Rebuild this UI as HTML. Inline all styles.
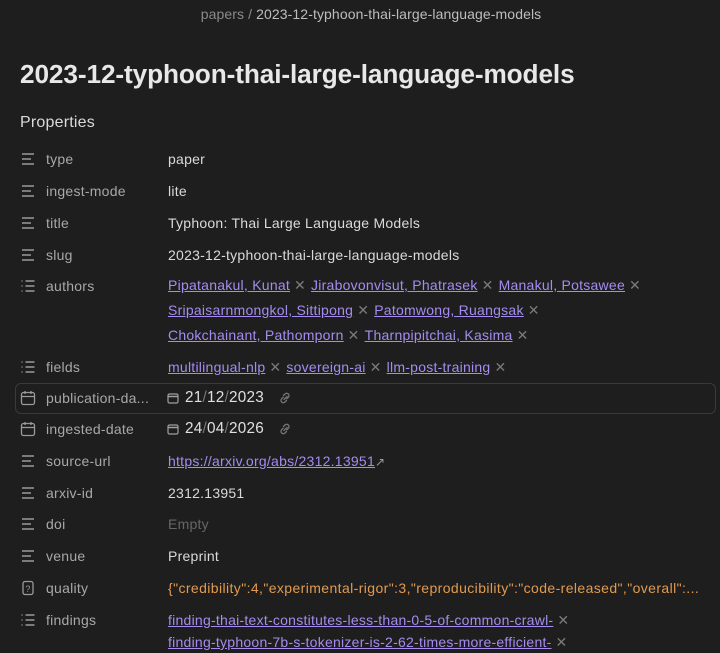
<!DOCTYPE html>
<html><head><meta charset="utf-8"><style>
html,body{margin:0;padding:0;background:#1e1e1e;width:720px;height:642px;overflow:hidden;font-family:"Liberation Sans",sans-serif;color:#dadada}
.bc{position:absolute;top:6px;left:11px;width:720px;text-align:center;font-size:14px;color:#bdbdbd;letter-spacing:0.1px}
.bc span{color:#8a8a8a}
h1{position:absolute;left:20px;top:59px;margin:0;font-size:26.2px;font-weight:bold;color:#e8e8e8;letter-spacing:-0.1px}
.ph{position:absolute;left:20px;top:114px;font-size:16px;color:#dadada;letter-spacing:0.2px}
.r{position:absolute;left:0;width:720px;font-size:14px;line-height:20px;letter-spacing:0.25px}
.ic{position:absolute;left:20px;top:2px;width:16px;height:16px}
.k{position:absolute;left:46px;color:#a8a8a8}
.v{position:absolute;left:168px;color:#dadada;white-space:nowrap}
a{color:#a48cf0;text-decoration:underline}
.x{color:#7a7a7a;margin:0 5px 0 4px}
.sl{color:#777}
.or{color:#e39a4f;letter-spacing:0.4px}
</style></head><body>
<div class="bc"><span>papers</span> <span>/</span> 2023-12-typhoon-thai-large-language-models</div>
<h1>2023-12-typhoon-thai-large-language-models</h1>
<div class="ph">Properties</div>

<svg width="0" height="0" style="position:absolute"><defs>
<g id="tx"><path d="M2 3h12M2 8h9M2 13h12" stroke="#9a9a9a" stroke-width="1.4" fill="none"/></g>
<g id="ls"><path d="M5.5 3h9M5.5 8h9M5.5 13h9" stroke="#9a9a9a" stroke-width="1.4" fill="none"/><path d="M1.5 3h1M1.5 8h1M1.5 13h1" stroke="#9a9a9a" stroke-width="1.4"/></g>
<g id="cal"><rect x="1.5" y="2.5" width="13" height="12" rx="2" stroke="#9a9a9a" stroke-width="1.3" fill="none"/><path d="M1.5 6.5h13M5 1v3M11 1v3" stroke="#9a9a9a" stroke-width="1.3"/></g>
<g id="sc"><rect x="1" y="2" width="10" height="9" rx="1.5" stroke="#a0a0a0" stroke-width="1.2" fill="none"/><path d="M1 4.5h10" stroke="#a0a0a0" stroke-width="1.5"/></g>
<g id="lk"><path d="M7 9.5l3-3M6.5 5.5l1.5-1.5a2.3 2.3 0 0 1 3.3 3.3L9.8 8.8M9.5 10.5L8 12a2.3 2.3 0 0 1-3.3-3.3l1.5-1.5" stroke="#777" stroke-width="1.3" fill="none" stroke-linecap="round"/></g>
</defs></svg>

<div class="r" style="top:149px"><svg class="ic"><use href="#tx"/></svg><span class="k">type</span><span class="v">paper</span></div>
<div class="r" style="top:181px"><svg class="ic"><use href="#tx"/></svg><span class="k">ingest-mode</span><span class="v">lite</span></div>
<div class="r" style="top:213px"><svg class="ic"><use href="#tx"/></svg><span class="k">title</span><span class="v">Typhoon: Thai Large Language Models</span></div>
<div class="r" style="top:245px"><svg class="ic"><use href="#tx"/></svg><span class="k">slug</span><span class="v">2023-12-typhoon-thai-large-language-models</span></div>
<div class="r" style="top:276px"><svg class="ic"><use href="#ls"/></svg><span class="k">authors</span>
<span class="v" style="line-height:25px;top:-3px"><a>Pipatanakul, Kunat</a><span class="x">✕</span><a>Jirabovonvisut, Phatrasek</a><span class="x">✕</span><a>Manakul, Potsawee</a><span class="x">✕</span><br><a>Sripaisarnmongkol, Sittipong</a><span class="x">✕</span><a>Patomwong, Ruangsak</a><span class="x">✕</span><br><a>Chokchainant, Pathomporn</a><span class="x">✕</span><a>Tharnpipitchai, Kasima</a><span class="x">✕</span></span></div>
<div class="r" style="top:357px"><svg class="ic"><use href="#ls"/></svg><span class="k">fields</span><span class="v"><a>multilingual-nlp</a><span class="x">✕</span><a>sovereign-ai</a><span class="x">✕</span><a>llm-post-training</a><span class="x">✕</span></span></div>
<div style="position:absolute;left:15px;top:383px;width:699px;height:29px;border:1px solid #3a3a3a;border-radius:6px"></div>
<div class="r" style="top:388px"><svg class="ic"><use href="#cal"/></svg><span class="k">publication-da...</span><svg style="position:absolute;left:167px;top:4px" width="12" height="12"><use href="#sc"/></svg><span class="v" style="left:185px;font-size:15.3px;color:#e0e0e0">21<span class="sl">/</span>12<span class="sl">/</span>2023</span><svg style="position:absolute;left:277px;top:2px" width="16" height="16"><use href="#lk"/></svg></div>
<div class="r" style="top:419px"><svg class="ic"><use href="#cal"/></svg><span class="k">ingested-date</span><svg style="position:absolute;left:167px;top:4px" width="12" height="12"><use href="#sc"/></svg><span class="v" style="left:185px;font-size:15.3px;color:#e0e0e0">24<span class="sl">/</span>04<span class="sl">/</span>2026</span><svg style="position:absolute;left:277px;top:2px" width="16" height="16"><use href="#lk"/></svg></div>
<div class="r" style="top:451px"><svg class="ic"><use href="#tx"/></svg><span class="k">source-url</span><span class="v"><a>https://arxiv.org/abs/2312.13951</a><span style="color:#999;font-size:12px">↗</span></span></div>
<div class="r" style="top:483px"><svg class="ic"><use href="#tx"/></svg><span class="k">arxiv-id</span><span class="v">2312.13951</span></div>
<div class="r" style="top:514px"><svg class="ic"><use href="#tx"/></svg><span class="k">doi</span><span class="v" style="color:#666">Empty</span></div>
<div class="r" style="top:546px"><svg class="ic"><use href="#tx"/></svg><span class="k">venue</span><span class="v">Preprint</span></div>
<div class="r" style="top:578px"><svg class="ic"><rect x="3" y="1.5" width="10" height="13" rx="2" stroke="#9a9a9a" stroke-width="1.3" fill="none"/><text x="8" y="12" font-size="9" fill="#9a9a9a" text-anchor="middle" font-family="Liberation Sans">?</text></svg><span class="k">quality</span><span class="v or">{"credibility":4,"experimental-rigor":3,"reproducibility":"code-released","overall":...</span></div>
<div class="r" style="top:610px"><svg class="ic"><use href="#ls"/></svg><span class="k">findings</span><span class="v" style="line-height:22px;top:-1px"><a>finding-thai-text-constitutes-less-than-0-5-of-common-crawl-</a><span class="x">✕</span><br><a>finding-typhoon-7b-s-tokenizer-is-2-62-times-more-efficient-</a><span class="x">✕</span></span></div>
</body></html>
